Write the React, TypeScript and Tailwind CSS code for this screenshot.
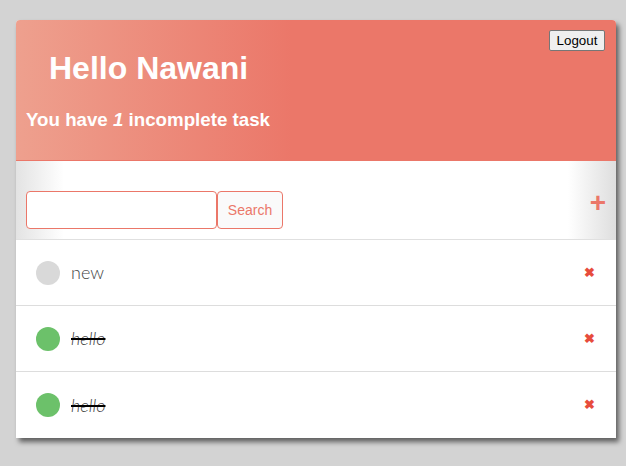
import React from "react";

const tasks = [
  { text: "new", done: false },
  { text: "hello", done: true },
  { text: "hello", done: true },
];

export default function App() {
  return (
    <div className="min-h-[466px] w-full bg-[#d3d3d3] pt-5 pl-4" style={{ fontFamily: "Arial, 'Liberation Sans', sans-serif" }}>
      <div className="w-[600px] rounded-t-[4px] bg-white shadow-[3px_4px_5px_rgba(0,0,0,0.55)]">
        <div className="relative h-[140px] rounded-t-[4px] bg-[linear-gradient(to_right,#eea08e,#eb7769_46%,#eb7769)] px-[10px] pt-[30px] text-white">
          <button className="absolute right-[11px] top-[10px] h-[21px] w-[56px] rounded-[2px] border border-[#767676] bg-[#efefef] text-[13.33px] leading-[17px] text-black">
            Logout
          </button>
          <h1 className="pl-[23px] text-[32px] font-bold leading-[37px]">Hello Nawani</h1>
          <p className="mt-[22px] text-[18.72px] font-bold leading-[22px]">
            You have <em>1</em> incomplete task
          </p>
        </div>
        <div className="flex h-[79px] items-end border-t border-[#eb7769] bg-[linear-gradient(to_right,#e3e3e3,#ffffff_8%,#ffffff_92%,#dedede)] px-[10px] pb-[10px]">
          <input className="h-[38px] w-[191px] rounded-[4px] border border-[#eb7769] bg-white px-2 outline-none" />
          <button className="h-[38px] w-[66px] rounded-[4px] border border-[#eb7769] bg-[#fafafa] text-[14px] text-[#eb7769]">
            Search
          </button>
          <span className="ml-auto mb-[14px] mr-[0px] text-[28px] font-bold leading-[24px] text-[#eb7769]">+</span>
        </div>
        <div className="border-t border-[#e0e0e0]">
          {tasks.map((t, i) => (
            <div key={i} className="flex h-[66px] items-center border-b border-[#dddddd] pl-[20px] pr-[21px] last:border-b-0">
              <span className={`h-6 w-6 rounded-full ${t.done ? "bg-[#6cc16a]" : "bg-[#d9d9d9]"}`} />
              <span
                className={`ml-[11px] text-[18px] font-light text-[#444444] ${t.done ? "italic line-through decoration-black decoration-2" : ""}`}
                style={{ fontFamily: "Lato, 'Noto Sans', sans-serif" }}
              >
                {t.text}
              </span>
              <span className="ml-auto text-[13px] font-bold text-[#e74c3c]">✖</span>
            </div>
          ))}
        </div>
      </div>
    </div>
  );
}
